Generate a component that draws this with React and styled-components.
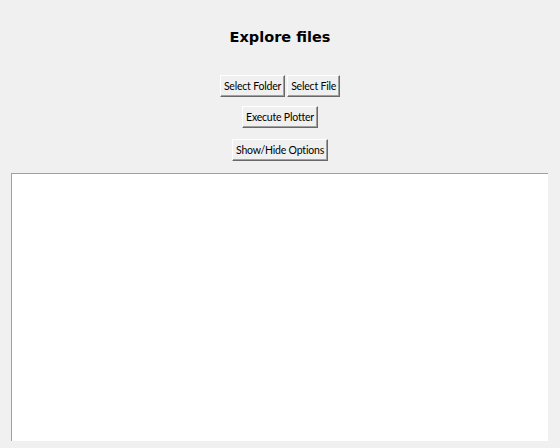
import React from 'react';
import styled, { createGlobalStyle } from 'styled-components';

const Global = createGlobalStyle`
  html, body {
    margin: 0;
    padding: 0;
    background: #f0f0f0;
  }
  #root {
    height: 448px;
  }
`

const Window = styled.div`
  width: 560px;
  height: 448px;
  background: #f0f0f0;
  display: flex;
  flex-direction: column;
  align-items: center;
  box-sizing: border-box;
  padding-top: 27px;
`

const Title = styled.div`
  font-family: "DejaVu Sans", Verdana, sans-serif;
  font-weight: bold;
  font-size: 14.5px;
  line-height: 20px;
  color: #000;
  margin-bottom: 28px;
`

const Row = styled.div`
  display: flex;
  gap: 2px;
  margin-bottom: ${p => p.$gap}px;
`

const Button = styled.button`
  font-family: Lato, "Noto Sans", sans-serif;
  font-size: 10.5px;
  letter-spacing: -0.2px;
  height: 22px;
  padding: 0 3px;
  color: #000;
  background: #f0f0f0;
  border: 1px solid;
  border-color: #ffffff #696969 #696969 #ffffff;
  box-shadow: inset -1px -1px 0 #a0a0a0;
  border-radius: 0;
  line-height: 18px;
  cursor: pointer;
`

const TextArea = styled.div`
  align-self: stretch;
  margin: 0 12px 0 11px;
  height: 268px;
  background: #fff;
  border-top: 1px solid #a0a0a0;
  border-left: 1px solid #a0a0a0;
  box-sizing: border-box;
`

export default function App() {
  return (
    <>
      <Global />
      <Window>
        <Title>Explore files</Title>
        <Row $gap={9}>
          <Button>Select Folder</Button>
          <Button>Select File</Button>
        </Row>
        <Row $gap={11}>
          <Button>Execute Plotter</Button>
        </Row>
        <Row $gap={12}>
          <Button>Show/Hide Options</Button>
        </Row>
        <TextArea />
      </Window>
    </>
  );
}
